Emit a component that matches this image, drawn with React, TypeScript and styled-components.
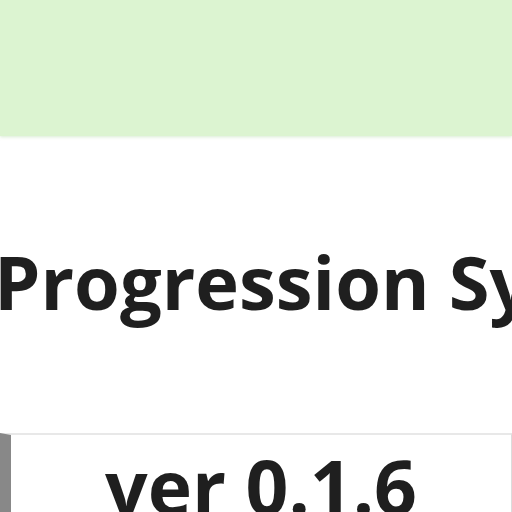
import React from 'react';
import styled, {createGlobalStyle} from 'styled-components';

const GlobalStyle = createGlobalStyle`
  html, body {
    margin: 0;
    padding: 0;
    background: #ffffff;
    overflow: hidden;
  }
  body {
    font-family: "Open Sans", "DejaVu Sans", sans-serif;
    color: #1f1f1f;
  }
`;

const Page = styled.div`
  width: 512px;
  height: 512px;
  display: flex;
  flex-direction: column;
  overflow: hidden;
`;

const Banner = styled.div`
  height: 136px;
  flex-shrink: 0;
  background: #dcf4d1;
  box-shadow: 0 1px 3px rgba(180, 220, 170, 0.5);
`;

const Title = styled.h1`
  margin: 95px 0 0 -6px;
  font-size: 74px;
  font-weight: 700;
  line-height: normal;
  white-space: nowrap;
  color: #1f1f1f;
`;

const VersionBox = styled.div`
  margin-top: 101px;
  flex-shrink: 0;
  width: 500px;
  border-top: 2px solid #e8e8e8;
  border-right: 1px solid #dcdcdc;
  border-left: 11px solid #888888;
  display: flex;
  justify-content: center;
`;

const VersionText = styled.span`
  font-size: 75px;
  font-weight: 700;
  line-height: normal;
  color: #1f1f1f;
`;

export default function App() {
    return (
        <Page>
            <GlobalStyle/>
            <Banner/>
            <Title>Progression System</Title>
            <VersionBox>
                <VersionText>ver 0.1.6</VersionText>
            </VersionBox>
        </Page>
    );
}
